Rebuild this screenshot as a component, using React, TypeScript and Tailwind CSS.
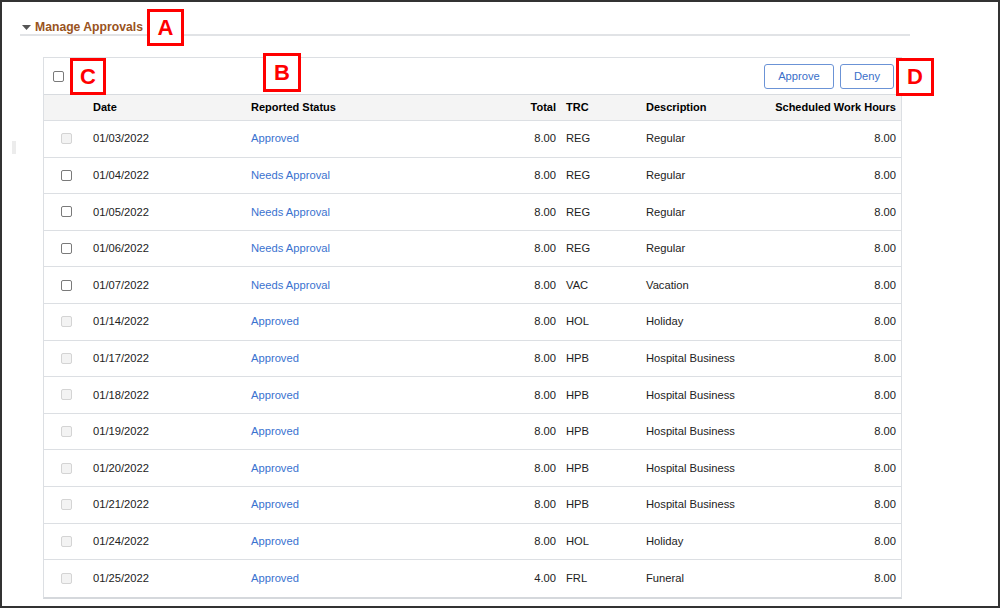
const rows = [
  { date: "01/03/2022", status: "Approved", total: "8.00", trc: "REG", desc: "Regular", hours: "8.00" },
  { date: "01/04/2022", status: "Needs Approval", total: "8.00", trc: "REG", desc: "Regular", hours: "8.00" },
  { date: "01/05/2022", status: "Needs Approval", total: "8.00", trc: "REG", desc: "Regular", hours: "8.00" },
  { date: "01/06/2022", status: "Needs Approval", total: "8.00", trc: "REG", desc: "Regular", hours: "8.00" },
  { date: "01/07/2022", status: "Needs Approval", total: "8.00", trc: "VAC", desc: "Vacation", hours: "8.00" },
  { date: "01/14/2022", status: "Approved", total: "8.00", trc: "HOL", desc: "Holiday", hours: "8.00" },
  { date: "01/17/2022", status: "Approved", total: "8.00", trc: "HPB", desc: "Hospital Business", hours: "8.00" },
  { date: "01/18/2022", status: "Approved", total: "8.00", trc: "HPB", desc: "Hospital Business", hours: "8.00" },
  { date: "01/19/2022", status: "Approved", total: "8.00", trc: "HPB", desc: "Hospital Business", hours: "8.00" },
  { date: "01/20/2022", status: "Approved", total: "8.00", trc: "HPB", desc: "Hospital Business", hours: "8.00" },
  { date: "01/21/2022", status: "Approved", total: "8.00", trc: "HPB", desc: "Hospital Business", hours: "8.00" },
  { date: "01/24/2022", status: "Approved", total: "8.00", trc: "HOL", desc: "Holiday", hours: "8.00" },
  { date: "01/25/2022", status: "Approved", total: "4.00", trc: "FRL", desc: "Funeral", hours: "8.00" },
];

const cols = "grid grid-cols-[44px_158px_214px_101px_80px_100px_160px]";

function Checkbox({ disabled }: { disabled?: boolean }) {
  return (
    <span
      className={
        disabled
          ? "block w-[11px] h-[11px] rounded-[2px] border border-[#d4d4d4] bg-[#f3f3f3]"
          : "block w-[11px] h-[11px] rounded-[2px] border border-[#7a7a7a] bg-white"
      }
    />
  );
}

function Marker({ letter, className }: { letter: string; className: string }) {
  return (
    <div
      className={`absolute flex items-center justify-center border-[3px] border-[#ff0000] bg-white text-[#ff0000] text-[22px] font-bold leading-none ${className}`}
    >
      {letter}
    </div>
  );
}

export default function App() {
  return (
    <div className="relative w-[1000px] h-[608px] border-2 border-[#333] bg-white font-['Liberation_Sans',Arial,sans-serif] text-[11.2px] text-[#222] overflow-hidden">
      {/* scroll edge mark */}
      <div className="absolute left-[10px] top-[139px] w-[4px] h-[13px] bg-[#ececec]" />

      {/* Section header */}
      <div className="ml-[18px] w-[890px]">
        <div className="flex items-center gap-[4px] pt-[18px] pl-[2px] h-[32px]">
          <svg width="9" height="5" viewBox="0 0 9 5" className="mt-[1px]">
            <path d="M0 0 L9 0 L4.5 5 Z" fill="#555" />
          </svg>
          <span className="text-[12.2px] font-bold text-[#99531d] leading-[14px]">Manage Approvals</span>
        </div>
        <div className="h-[2px] bg-[#e1e3e6]" />
      </div>

      {/* Grid */}
      <div className="ml-[41px] mt-[21px] w-[859px] border border-[#dcdfe3] border-b-2 border-b-[#d5d8dc]">
        <div className="flex items-center justify-between h-[37px] pl-[9px] pr-[7px] border-b border-[#d8dbdf]">
          <Checkbox />
          <div className="flex gap-[6px]">
            <button className="w-[70px] h-[25px] rounded-[3px] border border-[#6b93d6] bg-white text-[11.2px] text-[#3a6fc9]">
              Approve
            </button>
            <button className="w-[54px] h-[25px] rounded-[3px] border border-[#6b93d6] bg-white text-[11.2px] text-[#3a6fc9]">
              Deny
            </button>
          </div>
        </div>

        <div className={`${cols} h-[26px] items-center bg-[#f4f4f4] border-b border-[#dcdfe3] text-[11px] font-bold text-black`}>
          <div />
          <div className="pl-[5px]">Date</div>
          <div className="pl-[5px]">Reported Status</div>
          <div className="pr-[5px] text-right">Total</div>
          <div className="pl-[5px]">TRC</div>
          <div className="pl-[5px]">Description</div>
          <div className="pr-[5px] text-right">Scheduled Work Hours</div>
        </div>

        {rows.map((r, i) => (
          <div
            key={r.date}
            className={`${cols} h-[36.6px] items-center ${i < rows.length - 1 ? "border-b border-[#dcdfe3]" : ""}`}
          >
            <div className="pl-[17px]">
              <Checkbox disabled={r.status !== "Needs Approval"} />
            </div>
            <div className="pl-[5px]">{r.date}</div>
            <div className="pl-[5px] text-[#3a72cf]">{r.status}</div>
            <div className="pr-[5px] text-right">{r.total}</div>
            <div className="pl-[5px]">{r.trc}</div>
            <div className="pl-[5px]">{r.desc}</div>
            <div className="pr-[5px] text-right">{r.hours}</div>
          </div>
        ))}
      </div>

      {/* annotation markers */}
      <Marker letter="A" className="left-[145px] top-[7px] w-[37px] h-[37px]" />
      <Marker letter="B" className="left-[261px] top-[51px] w-[38px] h-[39px]" />
      <Marker letter="C" className="left-[68px] top-[56px] w-[36px] h-[37px]" />
      <Marker letter="D" className="left-[894px] top-[56px] w-[38px] h-[38px]" />
    </div>
  );
}
